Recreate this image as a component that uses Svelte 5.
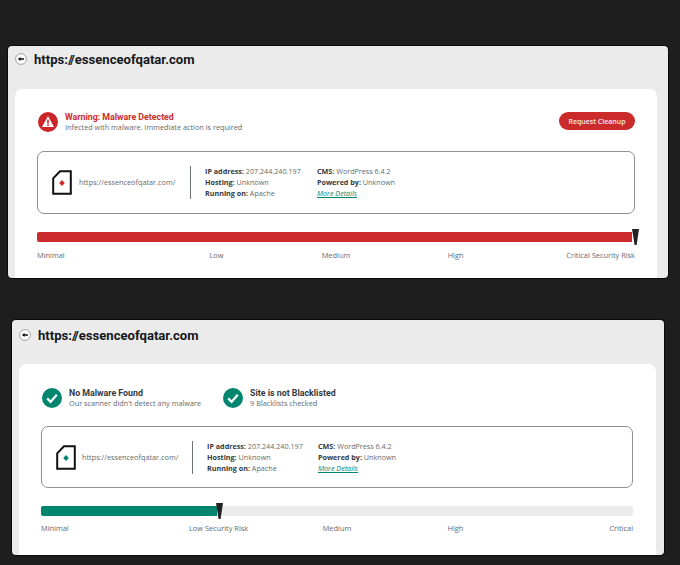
<script lang="ts">
    const sites = [
        {
            tone: 'danger',
            level: 100,
            labels: ['Minimal', 'Low', 'Medium', 'High', 'Critical Security Risk']
        },
        {
            tone: 'safe',
            level: 29.7,
            labels: ['Minimal', 'Low Security Risk', 'Medium', 'High', 'Critical']
        }
    ];
</script>

{#snippet check(title, sub)}
    <div class="status">
        <svg class="status-icon" viewBox="0 0 20 20" aria-hidden="true">
            <circle cx="10" cy="10" r="10" fill="#00856f" />
            <path d="M5.2 10.4 8.6 13.8 14.8 6.8" fill="none" stroke="#fff" stroke-width="2.2" />
        </svg>
        <div>
            <div class="status-title">{title}</div>
            <div class="status-sub">{sub}</div>
        </div>
    </div>
{/snippet}

<main class="page">
    {#each sites as site}
        <section class="card {site.tone}">
            <header class="top">
                <svg class="back" viewBox="0 0 12 12" aria-hidden="true">
                    <circle cx="6" cy="6" r="5.4" fill="#fff" stroke="#9a9a9a" stroke-width="0.9" />
                    <path d="M2.8 6 5.6 3.9V5.2H9V6.8H5.6V8.1Z" fill="#111" />
                </svg>
                <h1>https:<span class="slashes">//</span>essenceofqatar.com</h1>
            </header>

            <div class="panel">
                {#if site.tone === 'danger'}
                    <div class="alert">
                        <div class="status">
                            <svg class="status-icon" viewBox="0 0 20 20" aria-hidden="true">
                                <circle cx="10" cy="10" r="10" fill="#cc2529" />
                                <path d="M10 4 16 15H4Z" fill="#fff" />
                                <path d="M9.2 7.6h1.6v4.2H9.2ZM9.2 12.4h1.6v1.5H9.2Z" fill="#cc2529" />
                            </svg>
                            <div>
                                <div class="status-title red">Warning: Malware Detected</div>
                                <div class="status-sub">Infected with malware. Immediate action is required</div>
                            </div>
                        </div>
                        <button class="cleanup" type="button">Request Cleanup</button>
                    </div>
                {:else}
                    <div class="checks">
                        {@render check('No Malware Found', "Our scanner didn't detect any malware")}
                        {@render check('Site is not Blacklisted', '9 Blacklists checked')}
                    </div>
                {/if}

                <div class="info">
                    <svg class="site-icon" viewBox="0 0 20 25" aria-hidden="true">
                        <path d="M8 1.2H18.8V23.8H1.2V8.4Z" fill="#fff" stroke="#111" stroke-width="2" />
                        <path d="M10 10 12.8 13 10 16 7.2 13Z" class="dot" />
                    </svg>
                    <span class="url">https://essenceofqatar.com/</span>
                    <div class="divider"></div>
                    <div class="col first">
                        <div><b>IP address:</b> 207.244.240.197</div>
                        <div><b>Hosting:</b> Unknown</div>
                        <div><b>Running on:</b> Apache</div>
                    </div>
                    <div class="col">
                        <div><b>CMS:</b> WordPress 6.4.2</div>
                        <div><b>Powered by:</b> Unknown</div>
                        <div><a href="#details">More Details</a></div>
                    </div>
                </div>

                <div class="meter">
                    <div class="fill" style="width: {site.level}%"></div>
                    <svg class="needle" style="left: {site.level}%" viewBox="0 0 7 16" aria-hidden="true">
                        <path d="M0 0H7L4.6 16H2.6Z" fill="#222" />
                    </svg>
                </div>
                <div class="scale">
                    {#each site.labels as label}
                        <span>{label}</span>
                    {/each}
                </div>
            </div>
        </section>
    {/each}
</main>

<style>
    :global(body) {
        background: #1e1e1e;
    }

    .page {
        height: 565px;
        box-sizing: border-box;
        padding-top: 46px;
        overflow: hidden;
        font-family: "Open Sans", sans-serif;
        color: #666a6c;
    }

    .card {
        box-sizing: border-box;
        background: #ebebeb;
        border-radius: 4px;
        box-shadow: 0 0 0 1px #0c0c0c;
    }

    .card.danger {
        width: 660px;
        height: 232px;
        margin: 0 0 42px 8px;
        padding-left: 7px;
        padding-right: 11px;
        --accent: #cc2b2b;
    }

    .card.safe {
        width: 652px;
        height: 235px;
        margin-left: 12px;
        padding-left: 7px;
        padding-right: 8px;
        --accent: #00856f;
    }

    .top {
        display: flex;
        align-items: center;
        gap: 7px;
        height: 26px;
        margin-bottom: 17px;
    }

    .safe .top {
        height: 30px;
        margin-bottom: 14px;
    }

    .back {
        width: 12px;
        height: 12px;
    }

    h1 {
        margin: 0;
        font-family: Roboto, sans-serif;
        font-size: 13.1px;
        font-weight: 700;
        color: #15181c;
    }

    .slashes {
        letter-spacing: -1.2px;
        margin-right: 1px;
    }

    .panel {
        box-sizing: border-box;
        height: calc(100% - 43px);
        padding: 23px 22px 0;
        background: #fff;
        border-radius: 8px 8px 0 0;
    }

    .safe .panel {
        height: calc(100% - 44px);
        padding: 24px 23px 0 22px;
    }

    .alert {
        display: flex;
        justify-content: space-between;
        margin-bottom: 19px;
    }

    .checks {
        display: flex;
        gap: 22px;
        margin-bottom: 18px;
    }

    .status {
        display: flex;
        align-items: center;
        gap: 7px;
    }

    .alert .status,
    .checks {
        margin-left: 1px;
    }

    .status-icon {
        width: 20px;
        height: 20px;
        flex: none;
    }

    .status-title {
        font-family: Roboto, sans-serif;
        font-size: 8.8px;
        line-height: 11px;
        font-weight: 700;
        color: #343a40;
    }

    .status-title.red {
        color: #cc2b2b;
    }

    .status-sub {
        font-size: 7.3px;
        line-height: 9px;
    }

    .cleanup {
        width: 76px;
        height: 18px;
        padding: 0;
        border: 0;
        border-radius: 9px;
        background: #cc2b2b;
        color: #fbe9e9;
        font: 600 7px "Open Sans", sans-serif;
    }

    .info {
        display: flex;
        align-items: center;
        height: 63px;
        box-sizing: border-box;
        padding-left: 14px;
        border: 1px solid #8c9090;
        border-radius: 7px;
        font-size: 7.2px;
        line-height: 11px;
    }

    .safe .info {
        height: 62px;
    }

    .site-icon {
        width: 20px;
        height: 25px;
        flex: none;
    }

    .dot {
        fill: var(--accent);
    }

    .url {
        width: 111px;
        margin-left: 7px;
        font-size: 7.3px;
    }

    .safe .url {
        width: 110px;
        margin-left: 6px;
    }

    .divider {
        width: 1px;
        height: 33px;
        background: #6f7478;
    }

    .col.first {
        width: 112px;
        margin-left: 14px;
    }

    .safe .col.first {
        width: 111px;
    }

    b {
        font-weight: 700;
        color: #343a40;
    }

    a {
        font-style: italic;
        color: #00856f;
    }

    .meter {
        position: relative;
        height: 10px;
        margin-top: 18px;
        background: #ececec;
        border-radius: 2px;
    }

    .danger .meter {
        margin-right: 3px;
    }

    .fill {
        height: 100%;
        background: var(--accent);
        border-radius: 2px 0 0 2px;
    }

    .needle {
        position: absolute;
        top: -3px;
        width: 7px;
        height: 16px;
        margin-left: -1px;
    }

    .danger .needle {
        margin-left: 0;
    }

    .scale {
        display: grid;
        grid-template-columns: repeat(5, 1fr);
        margin-top: 8px;
        font-size: 7.4px;
        line-height: 10px;
        text-align: center;
        white-space: nowrap;
    }

    .safe .scale {
        margin-top: 7px;
    }

    .scale span:first-child {
        text-align: left;
    }

    .scale span:last-child {
        text-align: right;
    }
</style>
